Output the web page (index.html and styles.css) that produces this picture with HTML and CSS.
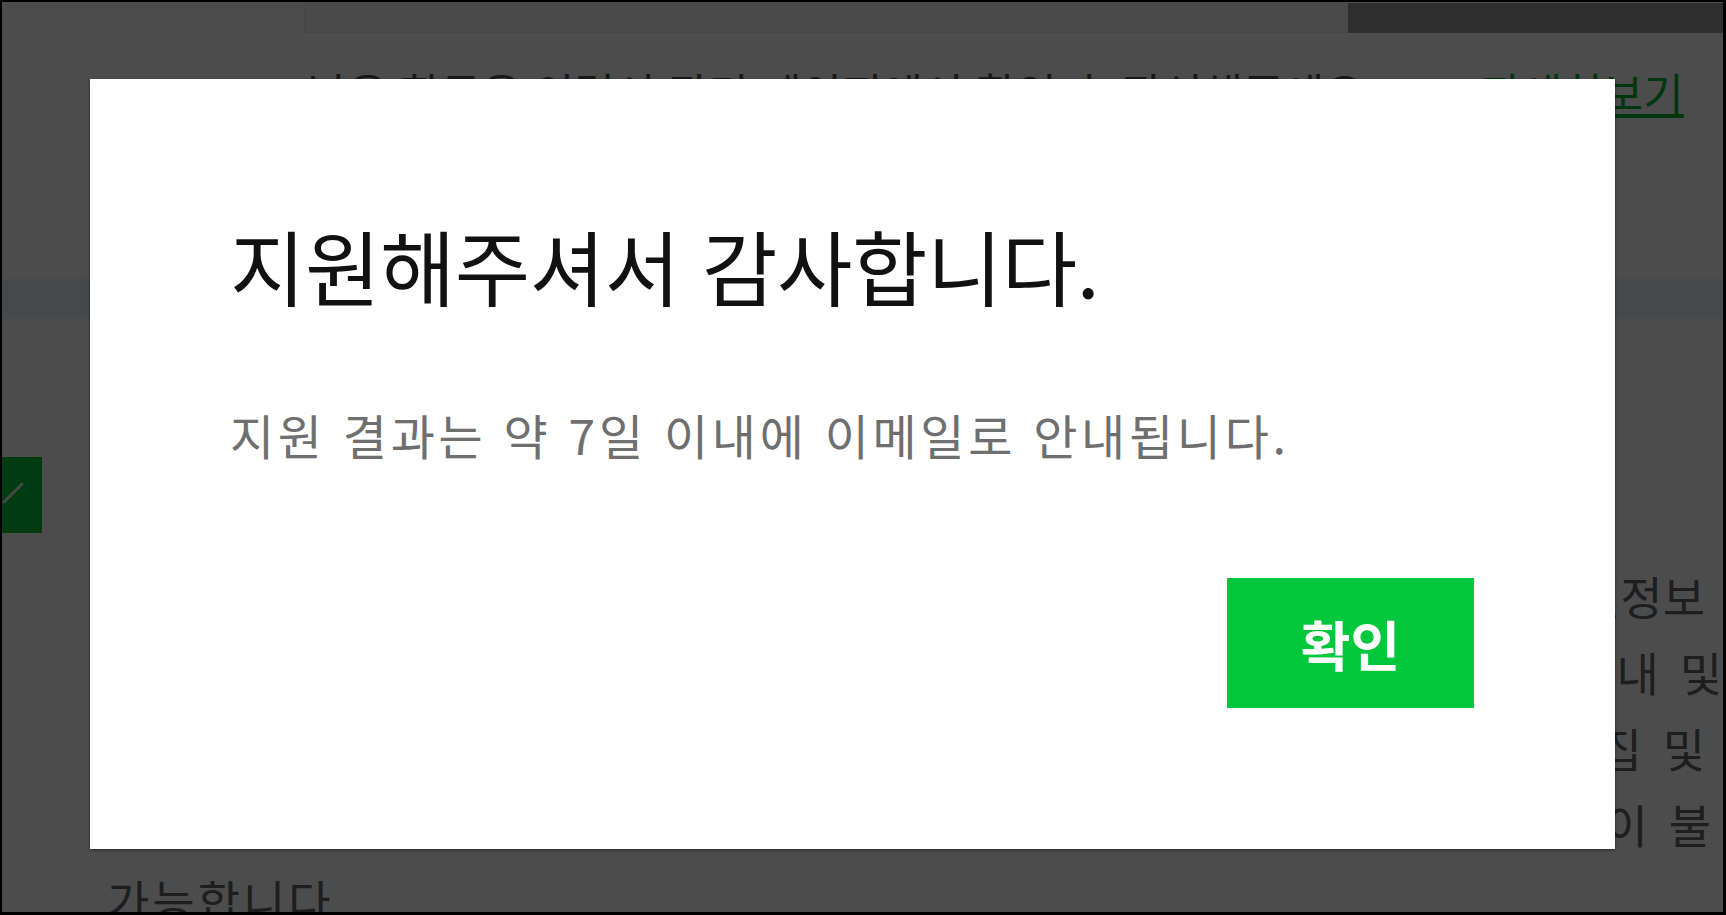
FILE: index.html
```html
<!DOCTYPE html>
<html lang="ko">
<head>
<meta charset="utf-8">
<title>지원 완료</title>
<link rel="stylesheet" href="styles.css">
</head>
<body>
<div class="frame">
  <div class="page">
    <header class="topbar">
      <div class="topbar-side"></div>
      <div class="search"></div>
      <div class="topbar-btn"></div>
    </header>
    <p class="notice">남은 항목은 이력서 관리 페이지에서 확인 후 작성해주세요. <a class="more" href="#">자세히보기</a></p>
    <div class="band"></div>
    <div class="agree-row">
      <span class="check-btn">
        <svg width="40" height="76" viewBox="0 0 40 76"><path d="M2 45 L20 27" stroke="#fff" stroke-width="3" stroke-linecap="round" fill="none" opacity="0.85"/></svg>
      </span>
    </div>
    <div class="terms">
      <div class="ln">등 개인정보</div>
      <div class="ln ln-wide">대한 안내 및</div>
      <div class="ln">정보 수집 및</div>
      <div class="ln ln-mid">지원이 불</div>
      <div class="ln ln-last">가능합니다.</div>
    </div>
  </div>
  <div class="overlay"></div>
  <div class="modal" role="dialog" aria-modal="true">
    <h2 class="modal-title">지원해주셔서 감사합니다.</h2>
    <p class="modal-text">지원 결과는 약 7일 이내에 이메일로 안내됩니다.</p>
    <button class="modal-btn" type="button">확인</button>
  </div>
</div>
</body>
</html>
```

FILE: styles.css
```css
* { box-sizing: border-box; }

html, body {
  margin: 0;
  padding: 0;
  background: #000;
}

body {
  font-family: "Noto Sans CJK KR", "Noto Sans", sans-serif;
}

.frame {
  position: relative;
  width: 1726px;
  height: 915px;
  border: 2px solid #000;
  border-right-width: 3px;
  border-bottom-width: 3px;
  overflow: hidden;
  background: #fff;
}

.page {
  display: flex;
  flex-direction: column;
  height: 100%;
}

.topbar {
  display: flex;
  height: 31px;
  flex: none;
}

.topbar-side {
  width: 302px;
}

.search {
  width: 1044px;
  background: #f7f7f7;
  border-left: 1px solid #ececec;
  border-bottom: 1px solid #e9e9e9;
}

.topbar-btn {
  flex: 1;
  background: #9d9d9d;
  margin-top: 1px;
}

.notice {
  margin: 29px 0 0;
  padding-left: 305px;
  font-size: 44px;
  line-height: 60px;
  color: #555;
  white-space: nowrap;
}

.more {
  color: #00b936;
  text-decoration: underline;
  margin-left: 92px;
}

.band {
  margin-top: 157px;
  height: 40px;
  background: #eef0f3;
  flex: none;
}

.agree-row {
  margin-top: 138px;
  display: flex;
  flex: none;
}

.check-btn {
  display: block;
  width: 40px;
  height: 76px;
  background: #00c73c;
}

.check-btn svg {
  display: block;
}

.terms {
  margin-top: 24px;
  padding: 0 18px 0 105px;
  font-size: 46px;
  line-height: 76px;
  color: #666;
  word-spacing: 8px;
}

.ln {
  text-align: right;
  white-space: nowrap;
}

.ln-wide { margin-right: -17px; }
.ln-mid { margin-right: -6px; }
.ln-last { text-align: left; letter-spacing: 3px; }

.overlay {
  position: absolute;
  inset: 0;
  background: rgba(0, 0, 0, 0.7);
}

.modal {
  position: absolute;
  left: 88px;
  top: 77px;
  width: 1525px;
  height: 770px;
  background: #fff;
  box-shadow: 0 1px 3px rgba(0, 0, 0, 0.45);
  display: flex;
  flex-direction: column;
  padding: 137px 141px 141px 140px;
}

.modal-title {
  margin: 0;
  font-size: 82px;
  line-height: 98px;
  font-weight: 400;
  color: #111;
  letter-spacing: -0.5px;
}

.modal-text {
  margin: 90px 0 0;
  font-size: 48px;
  line-height: 60px;
  color: #6f6f6f;
  letter-spacing: 3.7px;
}

.modal-btn {
  margin-top: auto;
  align-self: flex-end;
  width: 247px;
  height: 130px;
  border: 0;
  border-radius: 0;
  background: #00c73c;
  color: #fff;
  font-family: inherit;
  font-size: 54px;
  font-weight: 700;
  padding: 0;
}
```
